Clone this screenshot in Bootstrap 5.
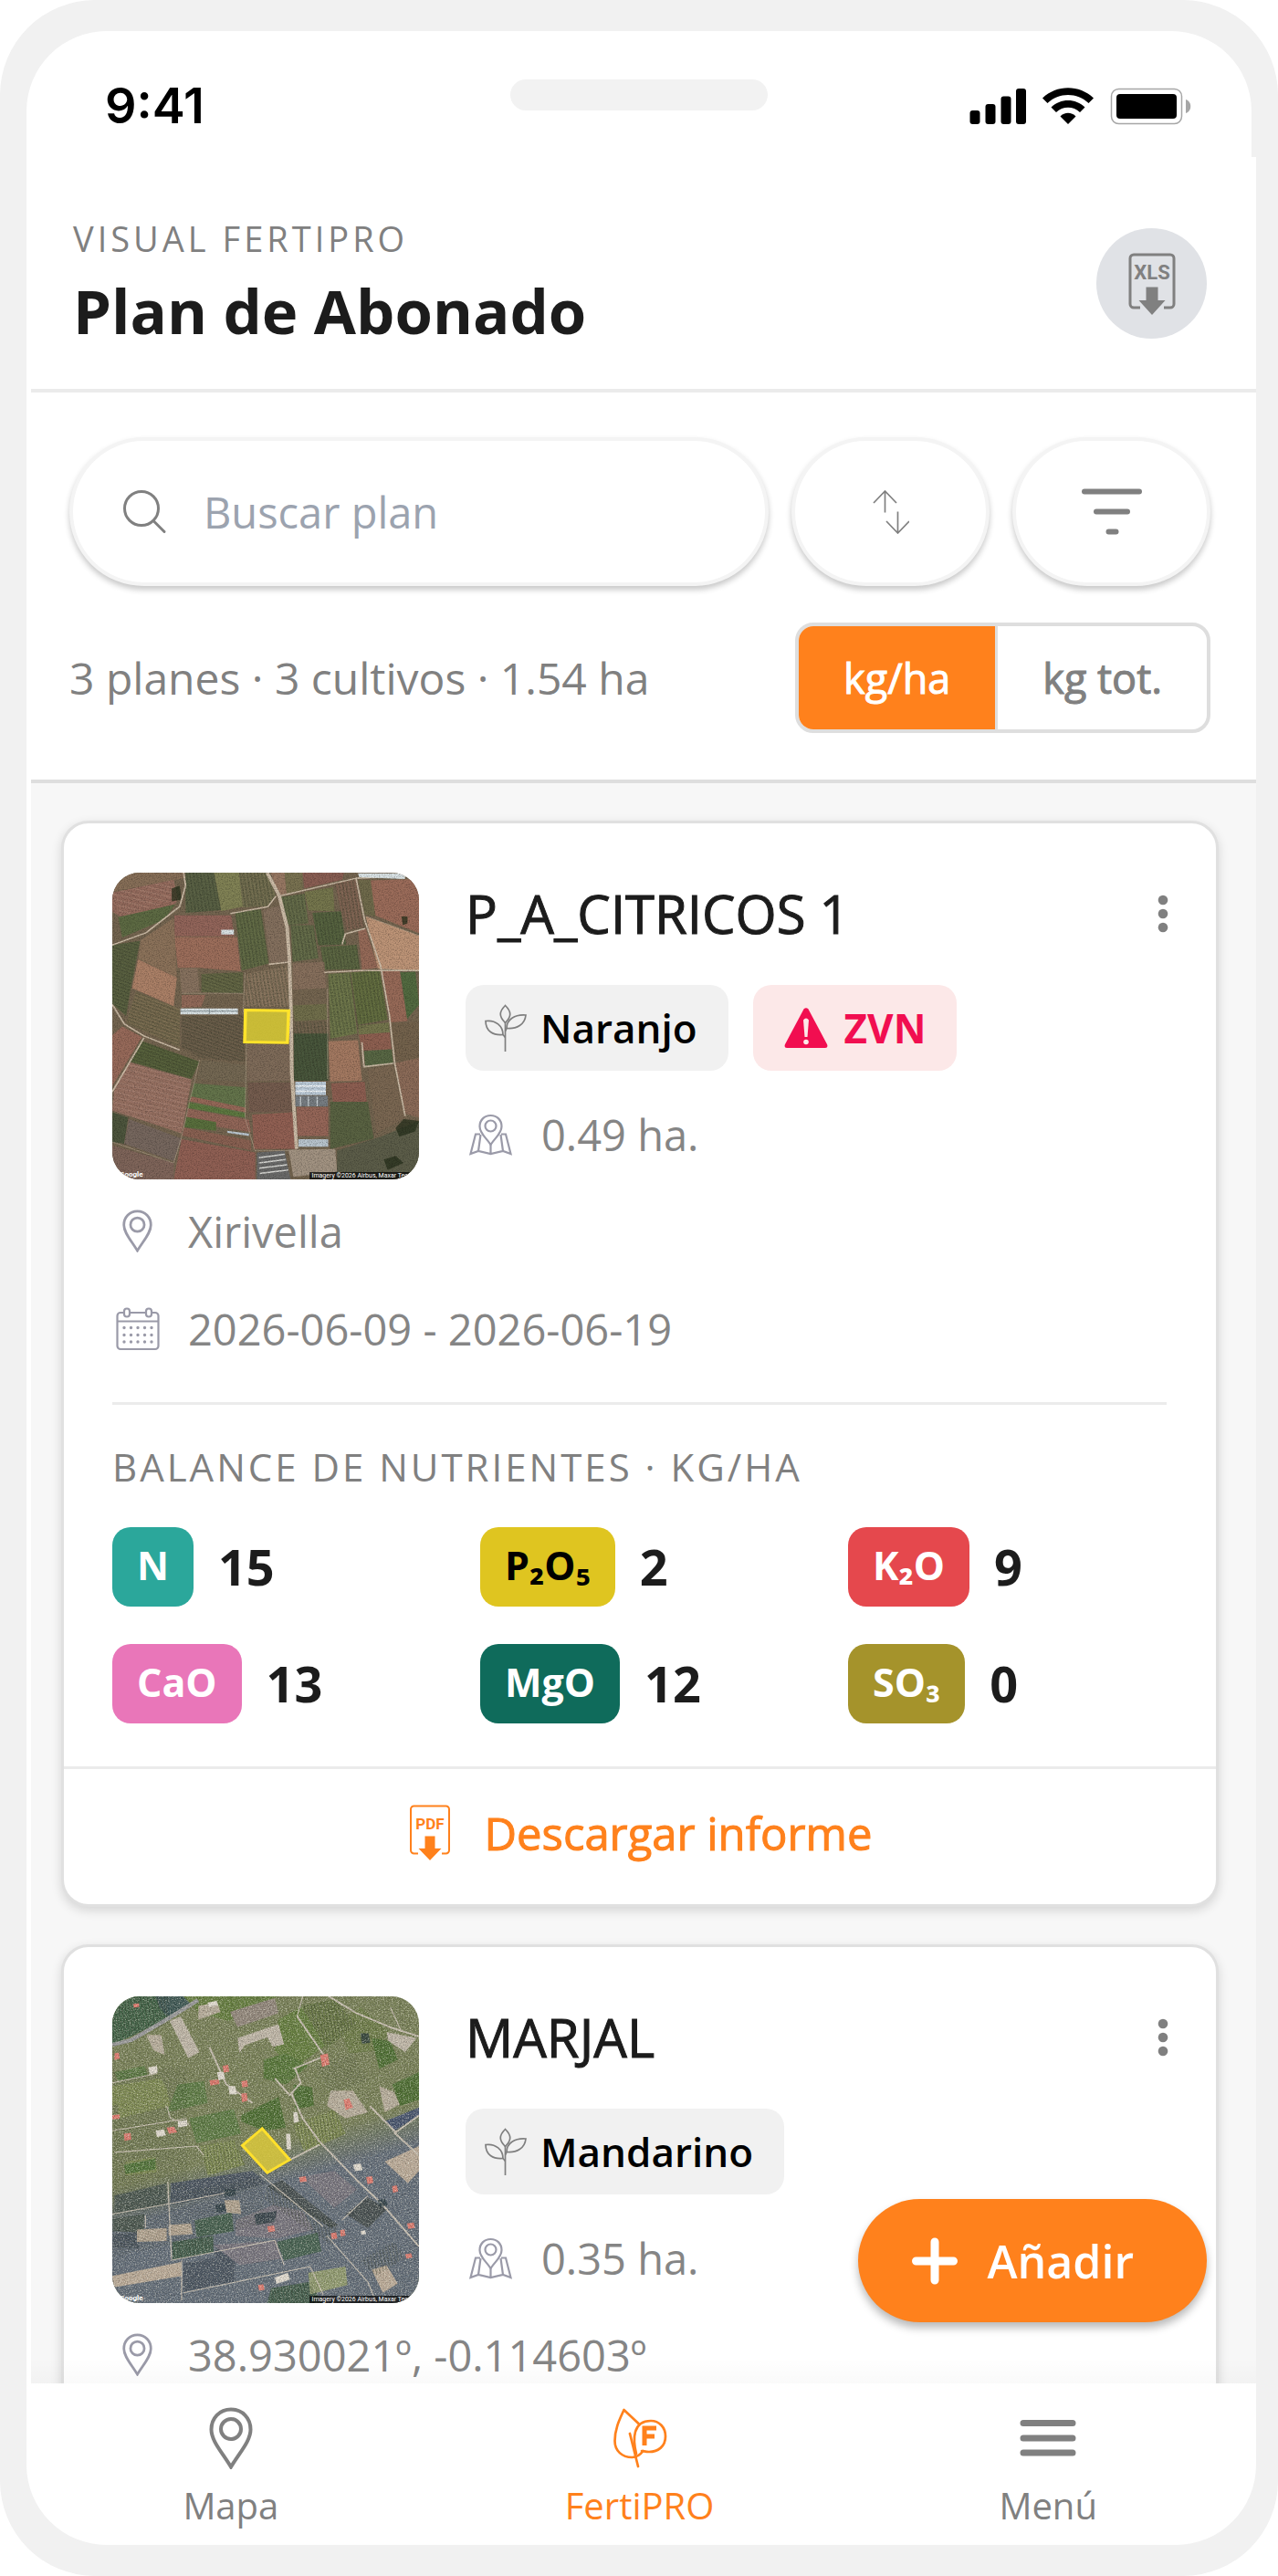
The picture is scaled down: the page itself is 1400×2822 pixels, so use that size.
<!DOCTYPE html>
<html lang="es">
<head>
<meta charset="utf-8">
<meta name="viewport" content="width=device-width, initial-scale=1">
<title>Plan de Abonado</title>
<link href="https://cdn.jsdelivr.net/npm/bootstrap@5.3.0/dist/css/bootstrap.min.css" rel="stylesheet">
<style>
  :root { --brand: #ff811c; --ink: #1c1c1c; --muted: #808080; --line: #dedede; --soft-line: #ebebeb; --frame: #f1f1f1; }
  body { font-family: "Open Sans", "Noto Sans", sans-serif; color: var(--ink); background: #fff; }
  svg { display: block; flex: none; }
  .phone { height: 100vh; background: var(--frame); border-radius: 104px; padding: 34px 24px 34px 29px; }
  .statusbar { height: 138px; margin-right: 5px; border-radius: 88px 88px 0 0; padding: 0 66px 0 86px; }
  .clock { font: 600 54px/78px Inter, sans-serif; color: #000; padding-top: 26px; }
  .speaker { width: 282px; height: 34px; border-radius: 17px; background: #f2f2f2; margin-top: 53px; }
  .status-icons { margin-top: 61px; }
  .screen { min-height: 0; border-radius: 0 0 88px 88px; }
  .screen-body { min-height: 0; margin-left: 5px; }
  .app-header { padding: 64px 54px 41px 46px; border-bottom: 4px solid var(--soft-line); }
  .eyebrow { font-size: 38px; line-height: 50px; letter-spacing: 4px; color: var(--muted); }
  .app-title { font-size: 67px; line-height: 90px; font-weight: 700; padding-top: 9px; }
  .round-btn { width: 121px; height: 121px; background: #e0e2e6; color: var(--muted); }
  .toolbar { padding: 49px 50px 51px 42px; border-bottom: 4px solid var(--line); }
  .toolbar-row { gap: 25px; margin-bottom: 40px; }
  .pill { height: 163px; border: 4px solid #f4f4f4; border-radius: 82px; background: #fff; color: var(--muted); box-shadow: 0 4px 6px rgba(0,0,0,.22); }
  .pill-btn { width: 217px; flex: none; }
  .search { padding: 0 53px; gap: 40px; }
  .search input, .search input:focus { border: 0; box-shadow: none; background: transparent; padding: 0; font-size: 47px; line-height: 64px; color: var(--ink); }
  .search input::placeholder { color: #9ca3af; opacity: 1; }
  .summary { font-size: 48px; line-height: 64px; color: var(--muted); }
  .medium { font-weight: 400; -webkit-text-stroke: 1px currentColor; }
  .units { height: 121px; border: 4px solid var(--line); border-radius: 20px; overflow: hidden; }
  .units .btn { font-size: 45px; line-height: 64px; color: var(--muted); border: 0; border-radius: 0; padding: 0 49px; display: flex; align-items: center; }
  .units .btn + .btn-check + .btn { border-left: 3px solid var(--line); }
  .units .btn-check:checked + .btn { background: var(--brand); color: #fff; }
  .plans { flex: 1 1 0; min-height: 0; overflow: hidden; background: #f7f7f7; padding: 41px 41px 0 33px; gap: 41px; }
  .plan { flex: none; border: 3px solid #e0e0e0; border-radius: 30px; box-shadow: 0 4px 12px rgba(0,0,0,.14); }
  .plan > .card-body { padding: 54px 54px 47px 53px; }
  .media { gap: 51px; }
  .thumb { width: 336px; height: 336px; border-radius: 30px; overflow: hidden; }
  .thumb-mark, .thumb-copy { font: 700 8px/9px Roboto, sans-serif; color: #fff; bottom: 1px; }
  .thumb-mark { left: 8px; }
  .thumb-copy { right: 0; font-weight: 400; font-size: 7px; line-height: 8px; background: rgba(0,0,0,.7); bottom: 0; padding: 0 12px 0 3px; }
  .plan-name { font-size: 58px; line-height: 90px; }
  .more { color: var(--muted); margin-top: 24px; margin-right: -5px; width: 18px; height: 42px; }
  .chips { gap: 27px; margin-top: 33px; }
  .chip { height: 94px; border-radius: 20px; background: #f1f1f1; font-size: 44px; line-height: 60px; font-weight: 600; color: #000; padding: 0 34px 0 21px; gap: 15px; }
  .chip-alert { background: #fce8e8; color: #f10e50; font-weight: 700; padding: 0 34px; gap: 18px; }
  .fact { font-size: 47px; line-height: 70px; color: #858585; gap: 31px; margin-top: 37px; }
  .fact.first { margin-top: 22px; }
  .media .fact { margin-top: 35px; }
  .fact svg { color: #9a9aa8; }
  .balance { border-top: 3px solid var(--soft-line); margin-top: 45px; padding-top: 38px; }
  .balance-title { font-size: 42px; line-height: 60px; letter-spacing: 3px; color: var(--muted); margin: 0 0 36px 0; font-weight: 400; }
  .nutrients { display: grid; grid-template-columns: repeat(3, 1fr); gap: 41px 54px; }
  .nutrient { gap: 27px; }
  .tag { height: 87px; border-radius: 20px; padding: 0 27px; font-size: 43px; line-height: 83px; font-weight: 700; color: #fff; }
  .tag-n { background: #2ba79b; } .tag-p { background: #dfc520; color: #000; } .tag-k { background: #e5484d; }
  .tag-ca { background: #e976b9; } .tag-mg { background: #0f6b5b; } .tag-s { background: #a5932b; }
  .amount { font-size: 54px; line-height: 87px; font-weight: 700; }
  .plan > .card-footer { background: transparent; border-top: 3px solid var(--soft-line); padding: 35px 0 43px; }
  .report { color: var(--brand); font-size: 49px; line-height: 70px; gap: 34px; }
  .fab { right: 54px; bottom: 67px; height: 135px; border-radius: 68px; background: var(--brand); color: #fff; font-size: 50px; font-weight: 600; line-height: 70px; padding: 0 80px 0 59px; gap: 33px; box-shadow: 0 6px 10px rgba(0,0,0,.28); }
  .fade-edge { height: 28px; background: linear-gradient(rgba(0,0,0,0), rgba(0,0,0,.02)); }
  .tabs { height: 177px; padding: 26px 4px 0 0; }
  .tabs a { color: var(--muted); font-size: 40px; line-height: 54px; gap: 13px; }
  .tabs a.active { color: var(--brand); }
  .doc-label { font-family: Roboto, "Liberation Sans", sans-serif; font-weight: 700; }
</style>
</head>
<body>
<svg width="0" height="0" class="position-absolute" aria-hidden="true">
  <defs>
    <symbol id="i-pin" viewBox="0 0 48 68"><path d="M24 2.500C11.500 2.500 2.500 12 2.500 24.500 2.500 37 14 49 24 65.500 34 49 45.500 37 45.500 24.500 45.500 12 36.500 2.500 24 2.500z" fill="none" stroke="currentColor" stroke-width="4"/><circle cx="24" cy="24" r="11" fill="none" stroke="currentColor" stroke-width="4"/></symbol>
    <symbol id="i-sprout" viewBox="0 0 46 52"><g fill="none" stroke="#7f7f7f" stroke-width="1.700"><path d="M22.500 52V20"/><path d="M22.500 1.500c-7 7-7 12 0 19 7-7 7-12 0-19z"/><path d="M1 18.500c0 11 8 16 19 15C20 24 12 17 1 18.500z"/><path d="M45 12C33 11 24 17 24 26.500c11 1 20-4 21-14.500z"/><path d="M20 33.500l2.500 3M24 26.500l-1.500 3"/></g></symbol>
    <symbol id="i-map" viewBox="0 0 47 46"><g fill="none" stroke="currentColor" stroke-width="2.200"><path d="M23.500 2C16.500 2 11.500 7 11.500 14c0 8 7 12 12 20 5-8 12-12 12-20 0-7-5-12-12-12z"/><circle cx="23.500" cy="13.500" r="6"/><path d="M12 22.500H7L1.500 44l8.500-3 13.500 3L37 41l8.500 3L40 22.500h-5M12.500 23L10 41M34.500 23L37 41M23.500 33v11"/></g></symbol>
    <symbol id="i-cal" viewBox="0 0 48 48"><g fill="none" stroke="currentColor" stroke-width="2.200"><path d="M9 6H5a3.500 3.500 0 0 0-3.500 3.500v33A3.500 3.500 0 0 0 5 46h38a3.500 3.500 0 0 0 3.500-3.500v-33A3.500 3.500 0 0 0 43 6h-4M15 6h18M1.500 15.500h45"/><rect x="9" y="1.500" width="6" height="9" rx="3"/><rect x="33" y="1.500" width="6" height="9" rx="3"/></g><g stroke="currentColor" stroke-width="3.400" stroke-linecap="round" stroke-dasharray="0 7.500"><path d="M9 22.500h31M9 30.500h31M9 38h31"/></g></symbol>
    <symbol id="i-dots" viewBox="0 0 18 42"><g fill="currentColor"><circle cx="9" cy="6" r="5.300"/><circle cx="9" cy="21" r="5.300"/><circle cx="9" cy="36" r="5.300"/></g></symbol>
    <symbol id="i-pdf" viewBox="0 0 46 61"><path d="M10 53.500H5.500A3.500 3.500 0 0 1 2 50V5a3.500 3.500 0 0 1 3.500-3.500h35A3.500 3.500 0 0 1 44 5v45a3.500 3.500 0 0 1-3.500 3.500H36" fill="none" stroke="currentColor" stroke-width="2"/><path d="M17.500 34.500h11V48H35.500L23 61 10.500 48h7z" fill="currentColor"/></symbol>
    <filter id="grain1" x="0" y="0" width="100%" height="100%"><feTurbulence type="fractalNoise" baseFrequency=".32" numOctaves="3" seed="4"/><feColorMatrix values="0 0 0 0 0  0 0 0 0 0  0 0 0 0 0  1.800 0 0 0 -.75"/></filter>
    <filter id="grain2" x="0" y="0" width="100%" height="100%"><feTurbulence type="fractalNoise" baseFrequency=".25" numOctaves="3" seed="9"/><feColorMatrix values="0 0 0 0 .9  0 0 0 0 .88  0 0 0 0 .78  2.400 0 0 0 -1.100"/></filter>
    <linearGradient id="dusk" gradientUnits="userSpaceOnUse" x1="560" y1="740" x2="600" y2="860"><stop offset="0" stop-color="#5b6572" stop-opacity="0"/><stop offset="1" stop-color="#5b6572"/></linearGradient>
    <pattern id="rows" width="9" height="9" patternUnits="userSpaceOnUse" patternTransform="rotate(-8)"><path d="M2 0v9" stroke="#1d2614" stroke-width="3.500" stroke-dasharray="5 2" opacity=".42"/></pattern>
    <pattern id="rowsH" width="9" height="9" patternUnits="userSpaceOnUse" patternTransform="rotate(22)"><path d="M0 2h9" stroke="#1d2614" stroke-width="3.500" opacity=".35"/></pattern>
    <pattern id="plough" width="5" height="14" patternUnits="userSpaceOnUse" patternTransform="rotate(15)"><path d="M0 2h5" stroke="#d0a898" stroke-width="1" opacity=".6"/></pattern>
  </defs>
</svg>

<div class="phone d-flex flex-column">
  <div class="statusbar bg-white d-flex justify-content-between position-relative">
    <div class="clock d-flex align-items-center">9:41</div>
    <div class="speaker position-absolute top-0 start-50 translate-middle-x"></div>
    <svg class="status-icons" width="243" height="42" viewBox="1062 95 243 42" aria-label="Cobertura, wifi y batería">
      <rect x="1062.500" y="121" width="11" height="15" rx="3"/><rect x="1079.500" y="114" width="11" height="22" rx="3"/><rect x="1096.500" y="105.500" width="11" height="30.500" rx="3"/><rect x="1113" y="97" width="11" height="39" rx="3"/>
      <path d="M1142 107.500c15.500-15 40.500-15 56 0l-5.500 5.500c-12.500-12-32.500-12-45 0z"/><path d="M1151.500 117.500c10-10 27-10 37 0l-5.500 5.500c-7-7-19-7-26 0z"/><path d="M1161.500 127.500c4.500-5 12.500-5 17 0L1170 136z"/>
      <rect x="1217.500" y="97.500" width="77" height="38" rx="8" fill="none" stroke="#a6a6a6" stroke-width="1.500"/><rect x="1223" y="103" width="66" height="27" rx="4"/><path d="M1299 109c7 2 7 13 0 15z" fill="#a6a6a6"/>
    </svg>
  </div>

  <div class="screen bg-white flex-grow-1 d-flex flex-column">
    <div class="screen-body flex-grow-1 d-flex flex-column position-relative">
      <header class="app-header d-flex justify-content-between align-items-center">
        <div>
          <div class="eyebrow">VISUAL FERTIPRO</div>
          <h1 class="app-title m-0">Plan de Abonado</h1>
        </div>
        <button class="round-btn btn rounded-circle border-0 p-0 d-flex align-items-center justify-content-center" type="button" aria-label="Descargar XLS">
          <svg width="52" height="68" viewBox="0 0 52 68"><path d="M13 60H6a4 4 0 0 1-4-4V6a4 4 0 0 1 4-4h40a4 4 0 0 1 4 4v50a4 4 0 0 1-4 4h-7" fill="none" stroke="currentColor" stroke-width="3"/><path d="M19.500 37.500h13V52h8L26 68 11.500 52h8z" fill="currentColor"/><text class="doc-label" x="26" y="29" font-size="22" text-anchor="middle" fill="currentColor">XLS</text></svg>
        </button>
      </header>

      <section class="toolbar">
        <div class="toolbar-row d-flex">
          <label class="search pill d-flex align-items-center flex-grow-1">
            <svg width="50" height="50" viewBox="0 0 50 50" fill="none" stroke="currentColor" stroke-width="3" stroke-linecap="round"><circle cx="22" cy="21" r="18.500"/><path d="M35 34.500L47 46.500"/></svg>
            <input type="search" class="form-control" placeholder="Buscar plan" aria-label="Buscar plan">
          </label>
          <button class="pill pill-btn btn d-flex align-items-center justify-content-center p-0" type="button" aria-label="Ordenar">
            <svg width="40" height="48" viewBox="956 536.500 40 48" fill="none" stroke="currentColor" stroke-width="1.700"><path d="M969.500 561v-23M957 550.500l12.500-13 12.500 13M983.500 560v23.500M971 570.500l12.500 13 12.500-13"/></svg>
          </button>
          <button class="pill pill-btn btn d-flex align-items-center justify-content-center p-0" type="button" aria-label="Filtrar">
            <svg width="68" height="52" viewBox="1184 535 68 52" stroke="currentColor" stroke-width="6" stroke-linecap="round"><path d="M1188 538.500h60M1201 560.500h34M1214.500 582.500h8"/></svg>
          </button>
        </div>
        <div class="d-flex justify-content-between align-items-center">
          <div class="summary">3 planes · 3 cultivos · 1.54 ha</div>
          <div class="units d-flex" role="group" aria-label="Unidades">
            <input type="radio" class="btn-check" name="unit" id="u-ha" checked><label class="btn medium" for="u-ha">kg/ha</label>
            <input type="radio" class="btn-check" name="unit" id="u-tot"><label class="btn medium" for="u-tot">kg tot.</label>
          </div>
        </div>
      </section>

      <main class="plans d-flex flex-column">
        <article class="plan card">
          <div class="card-body">
            <div class="media d-flex align-items-start">
              <div class="thumb position-relative flex-shrink-0">
                <svg width="336" height="336" viewBox="145 140 774 877" preserveAspectRatio="none">
                  <rect x="145" y="140" width="774" height="877" fill="#65553f"/>
                  <g>
                    <path fill="#7a6048" d="M145 140h180l5 15-185 40z"/><path fill="#895c4e" d="M145 197l155-37 10 55-10 25-135 25-30-20z"/><path fill="#4a5a30" d="M160 267l145-37-30 45-105 50z"/>
                    <path fill="#495334" d="M330 140h72l18 107-90 8z"/><path fill="#747645" d="M402 140h63l10 97-55 13z"/><path fill="#686342" d="M465 140h70l23 65-18 30-65 5z"/>
                    <path fill="#8d6a55" d="M545 140h35l5 60-20 5z"/><path fill="#6a6440" d="M580 140h45v50l-40 10z"/><path fill="#7d4d42" d="M625 140h105l-5 20-95 25z"/>
                    <path fill="#765745" d="M705 170l55-10 20 135-45 10z"/><path fill="#5f5a3a" d="M765 160l35 0 12 105-30-5z"/><path fill="#915d4a" d="M797 162l122-4v155l-110-50z"/><path fill="#b88a6b" d="M785 265l134 55v100l-104-5z"/>
                    <path fill="#66683c" d="M630 195l72-13 4 68-66-2z"/><path fill="#57603a" d="M570 210l60-10 10 85-50 5z"/><path fill="#45552e" d="M650 255l72-5 13 95-70 3z"/><path fill="#56603a" d="M595 290h58l12 95-65 10z"/><path fill="#4c5931" d="M670 352l92-6 8 70-90 2z"/><path fill="#8a5a48" d="M765 305l20-5 30 112-40 5z"/>
                    <path fill="#87554a" d="M302 262h143l8 60H302z"/><path fill="#925f4c" d="M302 324h158l9 98-105-10h-54z"/><path fill="#525e35" d="M455 252l65-7 20 155-68 20z"/><path fill="#77614f" d="M526 247l49-15 15 163-48 3z"/>
                    <path fill="#49522f" d="M145 347l70-12-25 145-10 70-35-35z"/><path fill="#7f644b" d="M217 333l83-63 8 170-98-55z"/><path fill="#a37359" d="M210 387l98 53-8 82-105-52z"/><path fill="#7a6450" d="M315 415l45-3 5 68-45 5z"/><path fill="#565a35" d="M370 430l105-5v60l-105-3z"/>
                    <path fill="#806a52" d="M485 430l105-25v118H478z"/><path fill="#865b49" d="M320 490l60 0-10 34-50 2z"/><path fill="#5e4f3b" d="M320 550l155-2 5 132-110-10-50-30z"/><path fill="#6f6042" d="M205 480l110 50v110L180 570z"/>
                    <path fill="#79604d" d="M600 400l80-5 5 75-85 5z"/><path fill="#605f3a" d="M600 520l85-5 3 45-83 5z"/><path fill="#354629" d="M603 600h87v135h-87z"/><path fill="#616c3b" d="M690 430l55-5 18 175-68 15z"/><path fill="#55622f" d="M747 425l73-5 20 140-75 15z"/>
                    <path fill="#8c5a48" d="M825 420h45l20 145-42 3z"/><path fill="#3e5a2d" d="M872 425l38-2 9 95-30 40z"/><path fill="#64513b" d="M850 570l69-3v103l-64 10z"/><path fill="#66683c" d="M765 577l78-8 2 28-78 6z"/><path fill="#824f40" d="M767 603l78-6 5 48-75 3z"/><path fill="#9a6c53" d="M690 622l75-3 10 116-80 2z"/><path fill="#455731" d="M780 650l70-5 4 40-70 12z"/>
                    <path fill="#705c49" d="M485 630h108l5 105H485z"/><path fill="#654b3d" d="M487 740h108l3 85H490z"/><path fill="#804d40" d="M697 742l85-4 5 57h-85z"/><path fill="#46512f" d="M695 795h95l15 105-110 30z"/><path fill="#6c5741" d="M790 705l62-15 33 150-73 45z"/><path fill="#7f5c48" d="M857 685l62-15v170l-34-10z"/>
                    <path fill="#864f42" d="M498 832l102-7 10 105H502z"/><path fill="#8a5648" d="M610 810h80v83h-78z"/><path fill="#595b5c" d="M510 940l70-5 15 82h-85z"/><path fill="#998978" d="M590 932l118-2 4 65-110 15z"/><path fill="#494c37" d="M712 935l110-40 97-45v167H712z"/>
                    <path fill="#8d5a4a" d="M145 605l25-25 50 30-75 140z"/><path fill="#465229" d="M217 620l148 60-20 50-155-50z"/><path fill="#8b6153" d="M188 682l157 50-25 153-175-65 5-70z"/><path fill="#655842" d="M370 675l110 15 5 50-125-10z"/><path fill="#52663a" d="M352 742l130 12-2 86-142-45z"/>
                    <path fill="#8a5848" d="M345 780l137 32v14L338 794z"/><path fill="#4b6a2d" d="M338 797l142 32v12l-145-28z"/><path fill="#865648" d="M335 815l155 32 5 35-165-30z"/><path fill="#466029" d="M332 838l75 15v25l-80-10z"/><path fill="#7d5041" d="M325 868l170 38v28l-175-42z"/>
                    <path fill="#38422a" d="M145 825l40 15-10 75-30-5z"/><path fill="#67574f" d="M187 845l133 55-20 65-125-50z"/><path fill="#854f44" d="M320 902l186 38v77H300z"/><path fill="#71554a" d="M145 920l155 50v47H145z"/>
                  </g>
                  <path fill="url(#rows)" d="M330 140h72l18 107-90 8zM465 140h70l23 65-18 30-65 5zM705 170l55-10 20 135-45 10zM570 210l60-10 10 85-50 5zM650 255l72-5 13 95-70 3zM595 290h58l12 95-65 10zM670 352l92-6 8 70-90 2zM455 252l65-7 20 155-68 20zM603 565h87v170h-87zM690 430l130-10 20 140-145 55zM485 430l105-25v118H478z"/>
                  <path fill="url(#rowsH)" d="M145 347l70-12-25 145-10 70-35-35zM370 430l105-5v60l-105-3zM205 480l110 50v110L180 570zM217 620l148 60-20 50-155-50zM320 550l155-2 5 132-110-10-50-30z"/>
                  <path fill="url(#plough)" d="M188 682l157 50-25 153-175-65 5-70zM145 197l155-37 10 55-145 50z"/>
                  <rect x="145" y="140" width="774" height="877" fill="#e8dccb" opacity=".12"/>
                  <g fill="#27301c" opacity=".75"><path d="M295 185l20-8 5 40-25 5zM860 870l20-25 39 5-10 30-40 15zM830 960l30-10 20 20-40 20zM875 265l15 0 0 20-12 5z"/></g>
                  <g fill="none" stroke="#cbbba6" stroke-linejoin="round"><path stroke-width="9" d="M536 140l30 65 20 90 6 90 4 150 2 180 12 215"/><path stroke-width="4" d="M558 207l-20 30-95 20M570 206l190-50 159-8M760 156l22 120 40 130 22 140 14 140 26 150M145 347l85-35 85-75 15-60-5-37M145 517l30 55 50 35 90 40M225 612l-80 155M540 402l50-6M725 345l8-30 50-15M680 425l90-5 149 0M855 685l-75 10-5-70"/><path stroke-width="2" opacity=".55" d="M145 910l155 60 20-75 45-220M485 540l-5 300 25 95h90M820 415l99 5M785 265l134 55M688 470v260M320 485h155M480 425l-5 120"/></g>
                  <g><path fill="#dbe4e6" d="M317 528h145v17H317zM420 303h32v14h-32zM765 142h120l-2 16-115-5z"/><path stroke="#78868a" stroke-width="2" d="M317 536h145M390 528v17"/><path fill="#bccbd8" d="M607 738h77v38h-77z"/><path fill="#777d82" d="M607 778h82v30h-82z"/><path stroke="#eef3f6" stroke-width="4" d="M607 750h77M607 765h77"/><path stroke="#c9cfd2" stroke-width="3" d="M620 780v28M640 780v28M662 780v28"/><path fill="#b9c5ce" d="M615 902h75v22h-75zM435 878l55 8v7l-55-9z"/><path stroke="#d6d6d2" stroke-width="4" d="M515 955l65-10M515 970l68-10M516 985l70-10M517 1000l72-10"/></g>
                  <rect x="145" y="140" width="774" height="877" filter="url(#grain1)" opacity=".35"/>
                  <path fill="#ddcf32" fill-opacity=".82" stroke="#ffe32b" stroke-width="8" d="M481 533l109 2-3 91-108-2z"/>
                </svg>
                <span class="thumb-mark position-absolute">Google</span><span class="thumb-copy position-absolute">Imagery ©2026 Airbus, Maxar Tec</span>
              </div>
              <div class="flex-grow-1">
                <div class="d-flex justify-content-between align-items-start">
                  <h2 class="plan-name medium m-0">P_A_CITRICOS 1</h2>
                  <button class="more btn border-0 p-0" type="button" aria-label="Más opciones"><svg width="18" height="42"><use href="#i-dots"/></svg></button>
                </div>
                <div class="chips d-flex">
                  <span class="chip d-flex align-items-center"><svg width="46" height="52"><use href="#i-sprout"/></svg>Naranjo</span>
                  <span class="chip chip-alert d-flex align-items-center"><svg width="48" height="44" viewBox="0 0 48 44"><path d="M21.500 1.500Q24-1 26.500 1.500L47 40q1.500 4-2 4H3q-3.500 0-2-4z" fill="currentColor"/><path d="M21 13.500q3-4 6 0L25.500 32h-3z" fill="#fce8e8"/><circle cx="24" cy="37.500" r="2.800" fill="#fce8e8"/></svg>ZVN</span>
                </div>
                <div class="fact d-flex align-items-center"><svg width="52" height="46" viewBox="0 0 52 46"><use href="#i-map" x="4" width="47" height="46"/></svg>0.49 ha.</div>
              </div>
            </div>
            <div class="fact first d-flex align-items-center"><svg width="52" height="48" viewBox="0 0 52 48"><use href="#i-pin" x="11" width="33" height="47"/></svg>Xirivella</div>
            <div class="fact d-flex align-items-center"><svg width="52" height="48" viewBox="0 0 52 48"><use href="#i-cal" x="4" width="48" height="48"/></svg>2026-06-09 - 2026-06-19</div>
            <div class="balance">
              <h3 class="balance-title">BALANCE DE NUTRIENTES · KG/HA</h3>
              <div class="nutrients">
                <div class="nutrient d-flex"><span class="tag tag-n">N</span><span class="amount">15</span></div>
                <div class="nutrient d-flex"><span class="tag tag-p">P₂O₅</span><span class="amount">2</span></div>
                <div class="nutrient d-flex"><span class="tag tag-k">K₂O</span><span class="amount">9</span></div>
                <div class="nutrient d-flex"><span class="tag tag-ca">CaO</span><span class="amount">13</span></div>
                <div class="nutrient d-flex"><span class="tag tag-mg">MgO</span><span class="amount">12</span></div>
                <div class="nutrient d-flex"><span class="tag tag-s">SO₃</span><span class="amount">0</span></div>
              </div>
            </div>
          </div>
          <div class="card-footer">
            <a href="#informe" class="report medium d-flex justify-content-center align-items-center text-decoration-none"><svg width="50" height="62" viewBox="-2 0 50 62"><use href="#i-pdf" width="46" height="61"/><text class="doc-label" x="23" y="27" font-size="17" text-anchor="middle" fill="currentColor" style="-webkit-text-stroke:0">PDF</text></svg>Descargar informe</a>
          </div>
        </article>

        <article class="plan card">
          <div class="card-body">
            <div class="media d-flex align-items-start">
              <div class="thumb position-relative flex-shrink-0">
                <svg width="336" height="336" viewBox="154 255 823 993" preserveAspectRatio="none">
                  <rect x="154" y="255" width="823" height="993" fill="#717a4f"/>
                  <path fill="url(#dusk)" d="M154 800l346-60 200-60 277-90v658H154z"/>
                  <g>
                    <path fill="#3a5f41" d="M154 255h150l60 25-60 45-100 60-50 25z"/><path fill="#344f4c" d="M270 255h100l10 20-80 45-20-30z"/><path fill="#5d7735" d="M345 255h250l-20 30-110 50-80-30zM600 330l60-40 70 120-90 80-50-60z"/><path fill="#66763f" d="M660 285l90-20 60 80-80 80zM760 340l60-50 80 80-40 60-70 10z"/><path fill="#456829" d="M850 390l50 10 20 60-50 30zM640 540l50 10 5 60-50 10zM905 540l72-40v90l-50 20zM500 640l100-60 20 100-60 10-60-30z"/>
                    <path fill="#54743a" d="M330 540l70-10 10 70-110 30zM360 650l120-30 20 80-120 30zM160 500l80-20 10 30-80 20z"/><path fill="#7d8a4d" d="M154 545l130-25 20 40-150 50zM170 590l130-30 10 50-140 40zM390 740l90-20 30 80-100 35zM640 670l110-50 30 80-110 60zM190 790l80-15 5 50-85 10z"/><path fill="#4d7332" d="M185 800l85-20v35l-80 15z"/><path fill="#4f6f2f" d="M560 460l60-20 60 40-60 60-60-20z"/>
                    <path fill="#8c8175" d="M470 305l120-45 10 50-110 45z"/><path fill="#beb5a5" d="M308 335l30-15 50 115-30 20zM490 390l110-45 15 65-30 8-15-30-60 25-15 25zM890 370l80 20-30 45-45-35z"/><path fill="#b5aa97" d="M385 285l50-10 10 30-60 25zM245 380l40 0 10 65-30-15zM740 560l60 0 40 70-60 20-50-40zM870 545l40 20 15 40-40 25z"/>
                    <path fill="#44514b" d="M160 900l140-40v70l-140 30zM155 975l85-15v60l-85-5z"/><path fill="#424d5a" d="M310 860l220-40 40 40-130 40-130 30zM155 1025l65-5 5 50-70 0zM345 1120l140-30-5 90-135 30zM430 1070l60-15v50l-60 10z"/><path fill="#3d5a49" d="M315 1050l110-20v55l-110 25zM375 980l100-25 5 60-100 20zM595 1050l110-30 10 60-100 30zM580 1200l100-20 40 68H570z"/>
                    <path fill="#706d78" d="M485 980l100-50 80 20 30 60-100 30-110-10zM425 1060l170-15 10 60-110 20zM660 840l90-20 60 60-60 60z"/><path fill="#b9a894" d="M220 1010l80-5v42l-80 3zM305 995l60-5 5 35-65 5zM154 1160l185-45 3 45-188 38zM455 915l40 0 5 45-40-5zM885 790l92-50v80l-30 40zM850 1140l40-15 30 60-40 30z"/><path fill="#3d4648" d="M780 960l60-55 50 40-50 60zM570 870l170 135 20-10-150-145z"/><path fill="#8a9568" d="M680 1150l100-20 5 60-100 30z"/><path fill="#3c4a66" d="M885 660l92-45v25l-65 50z"/>
                  </g>
                  <path fill="url(#rows)" d="M660 285l90-20 60 80-80 80zM640 670l110-50 30 80-110 60zM154 255h150v90l-150 60zM390 740l90-20 30 80-100 35zM315 1050l110-20v55l-110 25zM580 1200l100-20 40 68H570zM820 1110l90-60 30 50-80 60zM570 870l190 130-20 60-180-150z"/>
                  <path fill="url(#rowsH)" opacity=".6" d="M154 500l200-20v400l-200 45zM700 480l100-40 40 90-100 40zM154 930l400-90 10 150-410 110z"/>
                  <rect x="154" y="255" width="823" height="993" fill="#e6e2da" opacity=".08"/>
                  <g fill="none" stroke="#cbc2b4" stroke-linejoin="round"><path stroke="#9b9b9c" stroke-width="12" d="M154 412l50-15 100-70 80-60"/><path stroke-width="5" d="M735 255l75 55 90 45 77 30M650 320l80 140M640 490l80-40M635 570l30 80 45 75 100 125 70 80 97 135M590 520l40 55 30-40-15-45M415 420l45 120 70 60M630 785l80-50M845 610l70 85 62-55M910 695l67 75"/><path stroke-width="3" d="M154 960l160-35 130-30 30-10M303 855l10 250M243 965v40M154 535l120-30M300 610l10 40 50 20M154 690l200-40M160 760l220-20 20 30M310 1110l280-65 25 80M340 1110v130M345 1215l140-35 200-50 35 90M730 1030l110 150 20 60M840 900l-70 80M665 255l-15 65M720 1000l-170-170M900 290l30 80"/></g>
                  <g fill="#df7c70"><path d="M712 445l20-5 5 35-20 8zM450 480l15-3 3 22-15 3zM415 527l25-3 2 15-25 5zM500 530l16-3 2 20-15 3zM500 570l15-2 2 25-15 5zM775 590l15-5 10 30-20 8zM185 700l18-3 2 22-18 4zM160 440l12-3 2 20-14 4zM210 280l15-3 2 12-15 3zM300 680l20-3 8 18-22 5zM835 840l16-3 4 22-16 4zM905 870l13-3 3 20-14 4zM570 1000l18-3 3 18-18 3zM740 1022l15-3 3 20-15 3zM765 1012l12-3 3 20-13 3zM945 990l18-3 3 18-18 3zM545 1190l14-3 4 18-15 3zM655 840l18-3 3 17-18 3zM940 1090l16-3 3 14-16 3zM154 640l20-3v14l-20 2z"/></g>
                  <g fill="#e3ddd2"><path d="M435 500l18 0 4 22-18 4zM465 545l18 0 6 26-20 2zM250 485l24-5 2 22-20 6zM640 630l10 0 5 30-14 5zM270 690l22-5 6 20-24 5zM590 1165l35-15 6 22-36 14zM800 800l20-5 6 22-20 4zM620 700l12 0 2 50-12 0zM820 1015l12-3 3 12-12 3zM330 660l25-5v20l-25 4zM410 275l25-5 3 14-25 6z"/></g>
                  <g fill="#26383d" opacity=".7"><path d="M820 375l22 0 4 30-22 4zM430 930l26-5 4 25-26 6zM535 960l60-10-5 35-50 10zM865 915l20-5 10 20-22 8zM455 880l30 0 0 20-30 5z"/></g>
                  <rect x="154" y="255" width="823" height="993" filter="url(#grain2)" opacity=".6"/>
                  <rect x="154" y="255" width="823" height="993" filter="url(#grain1)" opacity=".35"/>
                  <path fill="#d9c83c" fill-opacity=".85" stroke="#ffe02b" stroke-width="8" d="M556 683l-53 55 67 88 60-42z"/>
                </svg>
                <span class="thumb-mark position-absolute">Google</span><span class="thumb-copy position-absolute">Imagery ©2026 Airbus, Maxar Tec</span>
              </div>
              <div class="flex-grow-1">
                <div class="d-flex justify-content-between align-items-start">
                  <h2 class="plan-name medium m-0">MARJAL</h2>
                  <button class="more btn border-0 p-0" type="button" aria-label="Más opciones"><svg width="18" height="42"><use href="#i-dots"/></svg></button>
                </div>
                <div class="chips d-flex">
                  <span class="chip d-flex align-items-center"><svg width="46" height="52"><use href="#i-sprout"/></svg>Mandarino</span>
                </div>
                <div class="fact d-flex align-items-center"><svg width="52" height="46" viewBox="0 0 52 46"><use href="#i-map" x="4" width="47" height="46"/></svg>0.35 ha.</div>
              </div>
            </div>
            <div class="fact first d-flex align-items-center"><svg width="52" height="48" viewBox="0 0 52 48"><use href="#i-pin" x="11" width="33" height="47"/></svg>38.930021º, -0.114603º</div>
          </div>
        </article>
      </main>
      <div class="fade-edge position-absolute bottom-0 start-0 end-0"></div>
      <button class="fab btn border-0 position-absolute d-flex align-items-center" type="button">
        <svg width="50" height="52" viewBox="0 0 50 52" stroke="currentColor" stroke-width="9" stroke-linecap="round"><path d="M4.500 26h41M25 5v42"/></svg>Añadir
      </button>
    </div>

    <nav class="tabs d-flex">
      <a href="#mapa" class="flex-fill w-100 d-flex flex-column align-items-center text-decoration-none"><svg width="48" height="68"><use href="#i-pin"/></svg>Mapa</a>
      <a href="#fertipro" class="active flex-fill w-100 d-flex flex-column align-items-center text-decoration-none">
        <svg width="60" height="68" viewBox="671 2639 60 68" fill="none" stroke="currentColor" stroke-width="2.700" stroke-linejoin="round" stroke-linecap="round"><path d="M699.500 2657L683.500 2642c-4 9-10 20-10 34 0 11 8 18 19 18 5 0 9-3 12-7"/><path d="M690 2668l9 36"/><path d="M697 2690c-4-16-4-36 16-36 9 0 16 7 16 17 0 11-8 17-18 17-4 0-6-1-8-1"/><path d="M719 2662h-13v19M706 2671h11" stroke-width="5" stroke-linejoin="miter" stroke-linecap="butt"/></svg>FertiPRO</a>
      <a href="#menu" class="flex-fill w-100 d-flex flex-column align-items-center text-decoration-none"><svg width="62" height="68" viewBox="0 0 62 68" stroke="currentColor" stroke-width="7" stroke-linecap="round"><path d="M4 17.500h54M4 34h54M4 50h54"/></svg>Menú</a>
    </nav>
  </div>
</div>
<script src="https://cdn.jsdelivr.net/npm/bootstrap@5.3.0/dist/js/bootstrap.bundle.min.js"></script>
</body>
</html>
